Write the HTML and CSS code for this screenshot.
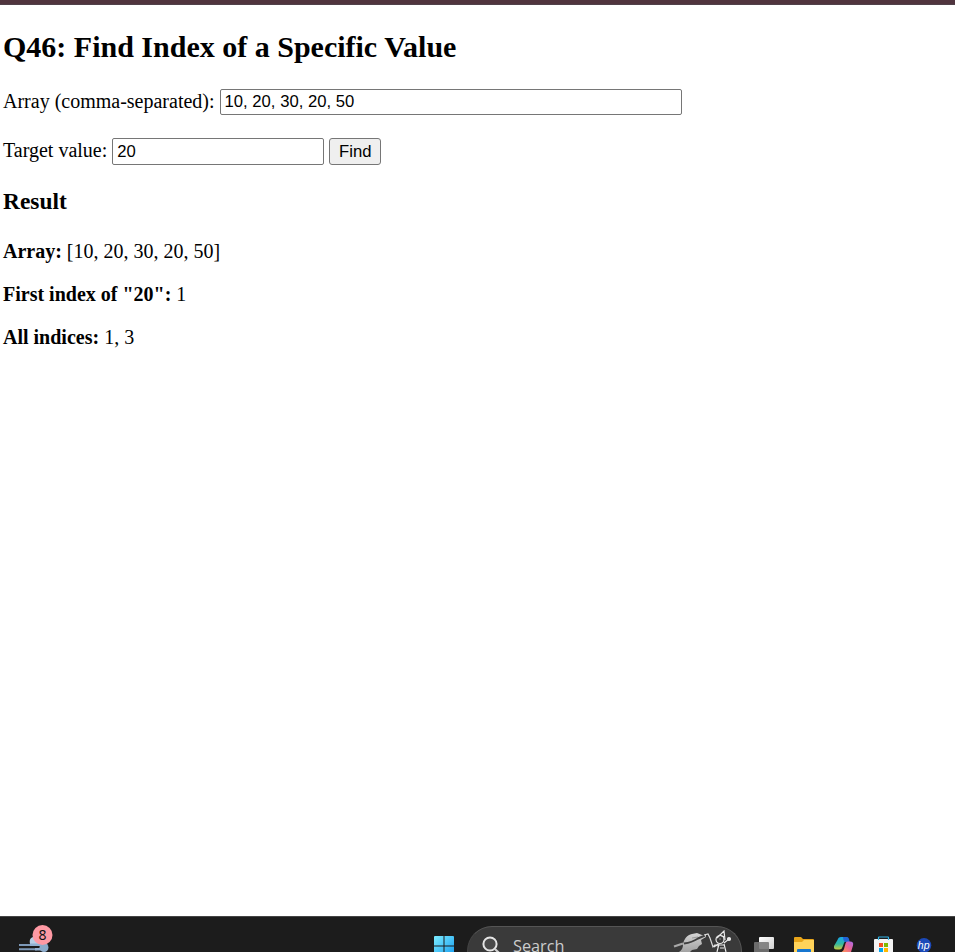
FILE: index.html
```
<!DOCTYPE html>
<html lang="en">
<head>
<meta charset="utf-8">
<title>Q46: Find Index of a Specific Value</title>
<link rel="stylesheet" href="styles.css">
</head>
<body>
<div class="browser-edge"></div>
<main class="page">
  <h2>Q46: Find Index of a Specific Value</h2>
  <form class="form">
    <div class="row">
      <label for="arr">Array (comma-separated):</label>
      <input id="arr" class="field field-array" type="text" value="10, 20, 30, 20, 50">
    </div>
    <div class="row row-target">
      <label for="target">Target value:</label>
      <input id="target" class="field field-target" type="text" value="20">
      <button class="find" type="button">Find</button>
    </div>
  </form>
  <h3>Result</h3>
  <p><b>Array:</b> [10, 20, 30, 20, 50]</p>
  <p><b>First index of "20":</b> 1</p>
  <p><b>All indices:</b> 1, 3</p>
</main>
<footer class="taskbar">
  <svg class="weather" width="40" height="28" viewBox="0 0 40 28">
    <path d="M2 21h14M2 25.300h18" stroke="#7d99b8" stroke-width="2"/>
    <path d="M13 20c-1-5 1-7 4-7l6 7z" fill="#b7cde4"/>
    <path d="M13 20.800h13M18 25.300h10" stroke="#92b0d0" stroke-width="2.600"/>
    <circle cx="27" cy="23.500" r="4.500" fill="#8cabcb"/>
    <circle cx="25.500" cy="11" r="10" fill="#ff99a4"/>
    <text class="badge-text" x="25.500" y="16" text-anchor="middle">8</text>
  </svg>
  <svg class="start" width="20" height="16" viewBox="0 0 20 16">
    <defs><linearGradient id="win" x1="0" y1="0" x2="20" y2="20" gradientUnits="userSpaceOnUse"><stop offset="0" stop-color="#7cecff"/><stop offset="1" stop-color="#159cf0"/></linearGradient></defs>
    <path d="M1 0h8.500v9.500H0V1q0-1 1-1zM10.500 0H19q1 0 1 1v8.500h-9.500zM0 10.500h9.500V20H0zM10.500 10.500H20V20h-9.500z" fill="url(#win)"/>
  </svg>
  <div class="search">
    <svg class="lens" width="20" height="17" viewBox="0 0 20 17"><circle cx="8" cy="9" r="6.600" fill="#4a4a4a" stroke="#e4e4e4" stroke-width="2"/><path d="M12.700 13.700l4.300 4.300" stroke="#d0d0d0" stroke-width="2.200"/></svg>
    <span class="search-text">Search</span>
    <svg class="sketch" width="60" height="22" viewBox="0 0 60 22">
      <defs><linearGradient id="hand" x1="0" y1="0" x2="0" y2="1"><stop offset="0" stop-color="#d4d4d4"/><stop offset="1" stop-color="#a0a0a0"/></linearGradient></defs>
      <path d="M6 22c3-2 4-4 4-8 1-5 4-9 9-10l5-1 5 2h4v2l-5 3 1 4-3 2-2 3-5 1-3 3z" fill="url(#hand)"/>
      <path d="M19 8l6-1" fill="none" stroke="#999" stroke-width="1"/>
      <path d="M11 13.500q8-1 14-5l7-3" fill="none" stroke="#404040" stroke-width="2"/>
      <path d="M1 16.500l9-3" stroke="#a8a8a8" stroke-width="2.200"/>
      <path d="M31 5l4-1 2 4 3 9 2-2 3 1" fill="none" stroke="#ddd" stroke-width="1.200"/>
      <g fill="none" stroke="#e8e8e8" stroke-width="1.200">
        <circle cx="47" cy="9.500" r="4"/><path d="M44 8l7-7 1 9M46 5l6 2M46.500 9h1M46 14l-2 8M51 14l2 8M45 15h6M45 14l-4 3M51 13l5-4M47 18h4"/><circle cx="56" cy="9" r="1.500" fill="#e8e8e8"/>
      </g>
    </svg>
  </div>
  <svg class="tasks" width="22" height="16" viewBox="0 0 22 16">
    <defs><linearGradient id="pane" x1="0" y1="0" x2="1" y2="1"><stop offset="0" stop-color="#fff"/><stop offset="1" stop-color="#d0d0d0"/></linearGradient></defs>
    <rect x="5" y="1" width="15" height="12" rx="1" fill="url(#pane)"/><rect x="0" y="6" width="15" height="12" rx="1" fill="#777" opacity=".88"/>
  </svg>
  <svg class="folder" width="20" height="16" viewBox="0 0 20 16">
    <path d="M0 2q0-1 1-1h6l2 2h10q1 0 1 1v12H0z" fill="#e8a51a"/><path d="M0 6h8l2-2h10v12H0z" fill="#ffd35a"/><path d="M3 16v-2q0-1 1-1h12q1 0 1 1v2z" fill="#1776cf"/>
  </svg>
  <svg class="copilot" width="20" height="16" viewBox="0 0 20 16">
    <defs><linearGradient id="cool" x1="0" y1="0" x2="0" y2="1"><stop offset="0" stop-color="#19a5e8"/><stop offset=".55" stop-color="#31b8a0"/><stop offset="1" stop-color="#c8cc3c"/></linearGradient><linearGradient id="warm" x1="1" y1="0" x2="0" y2="1"><stop offset="0" stop-color="#a66bf0"/><stop offset=".5" stop-color="#eb628e"/><stop offset="1" stop-color="#ff9a55"/></linearGradient></defs>
    <path d="M3.500 4q.8-3 3.500-3h5q2 0 2.500 2l.5 2h-2.500q-2 0-2.500 2l-1.500 4q-.7 2.500-3 2.500H3q-4 0-3-3.500z" fill="url(#cool)"/>
    <path d="M9 1h3.500q2 0 2.500 2l.7 3H12q-2 0-2.500-2z" fill="#2163d6"/>
    <path d="M13.500 5.500H16q4 0 3 4L17 16H7.500q2-1 2.500-3l1.500-5.500q.5-2 2-2z" fill="url(#warm)"/>
  </svg>
  <svg class="store" width="19" height="16" viewBox="0 0 19 16">
    <path d="M0 4q0-1 1-1h17q1 0 1 1v12H0z" fill="#f3f3f3"/><path d="M4.500 4V1.500q0-.5.500-.5h9q.5 0 .5.500V4" fill="none" stroke="#32b4e8" stroke-width="1.200"/>
    <path d="M5 7h4v4H5z" fill="#f25022"/><path d="M10 7h4v4h-4z" fill="#7fba00"/><path d="M5 12h4v4H5z" fill="#00a4ef"/><path d="M10 12h4v4h-4z" fill="#ffb900"/>
  </svg>
  <svg class="hp" width="16" height="16" viewBox="0 0 16 16">
    <circle cx="8" cy="9.300" r="7.300" fill="#1c49b8"/><text class="hp-text" x="7.700" y="12.500" text-anchor="middle">hp</text>
  </svg>
</footer>
</body>
</html>
```
FILE: styles.css
```
* { box-sizing: border-box; }
body {
  margin: 0;
  height: 952px;
  display: flex;
  flex-direction: column;
  overflow: hidden;
  background: #fff;
  color: #000;
  font: 20px/23px "Liberation Serif", "Times New Roman", serif;
}
.browser-edge { height: 5px; flex: none; background: #50343e; border-bottom: 1px solid #51414a; }
.page { flex: 1; padding: 24px 3px 0; }
h2 { margin: 0 0 25px; font-size: 30px; line-height: 35px; }
.row { display: flex; height: 26px; align-items: flex-start; gap: 5px; }
.row-target { height: 27px; margin-top: 23px; }
.row label { white-space: nowrap; line-height: 25px; }
.field, .find {
  height: 100%;
  margin: 0;
  font: 16.67px "Liberation Sans", Arial, sans-serif;
  color: #000;
  border: 1px solid #767676;
}
.field { padding: 0 4px; border-radius: 2px; background: #fff; outline: 0; }
.field-array { width: 462px; }
.field-target { width: 212px; }
.find { width: 52px; padding: 0; border-radius: 3px; background: #efefef; }
h3 { margin: 23px 0 26px; font-size: 23.4px; line-height: 26px; }
p { margin: 0 0 20px; }
.taskbar {
  flex: none;
  height: 36px;
  display: flex;
  align-items: flex-end;
  background: #1c1c1c;
  border-top: 1px solid #454545;
  overflow: hidden;
}
.taskbar svg { flex: none; display: block; }
.weather { margin-left: 17px; }
.badge-text { font: 14px "Noto Sans", sans-serif; fill: #111; }
.start { margin-left: 377px; }
.search {
  flex: none;
  width: 275px;
  height: 26px;
  margin-left: 13px;
  padding-left: 14px;
  display: flex;
  align-items: flex-end;
  background: #3a3a3a;
  border: 1px solid #555;
  border-bottom: 0;
  border-left-color: #444;
  border-radius: 25px 25px 0 0;
  overflow: hidden;
}
.search-text { width: 158px; margin-left: 11px; height: 17px; line-height: 22px; font-family: "Open Sans", sans-serif; font-size: 16.3px; color: #ccc; }
.sketch { margin-left: 2px; }
.tasks { margin-left: 12px; }
.folder { margin-left: 18px; }
.copilot { margin-left: 20px; }
.store { margin-left: 20px; }
.hp { margin-left: 23px; }
.hp-text { font: italic 10.5px "Liberation Sans", sans-serif; fill: #fff; }
```
